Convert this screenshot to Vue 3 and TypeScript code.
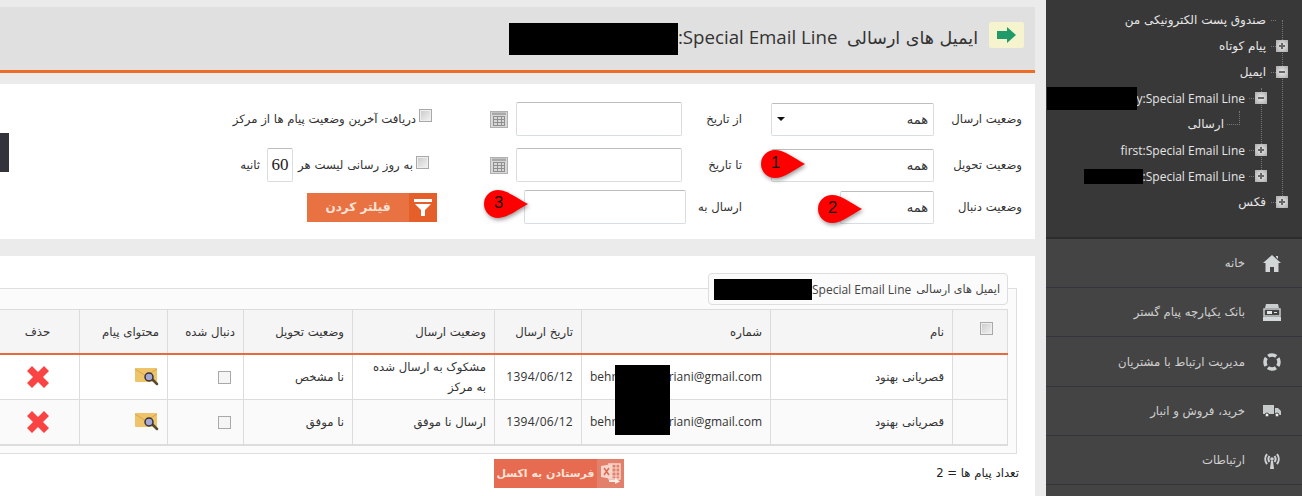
<script setup lang="ts">
interface TreeNode {
  label: string;
  exp?: "plus" | "minus";
  redact?: "long" | "short";
  level: number;
  latin?: boolean;
}

const tree: TreeNode[] = [
  { label: "صندوق پست الکترونیکی من", level: 0 },
  { label: "پیام کوتاه", exp: "plus", level: 0 },
  { label: "ایمیل", exp: "minus", level: 0 },
  { label: "y:Special Email Line", exp: "minus", redact: "long", level: 1, latin: true },
  { label: "ارسالی", level: 2 },
  { label: "first:Special Email Line", exp: "plus", level: 1, latin: true },
  { label: ":Special Email Line", exp: "plus", redact: "short", level: 1, latin: true },
  { label: "فکس", exp: "plus", level: 0 },
];

const navItems = [
  { label: "خانه", icon: "home" },
  { label: "بانک یکپارچه پیام گستر", icon: "bank" },
  { label: "مدیریت ارتباط با مشتریان", icon: "ring" },
  { label: "خرید، فروش و انبار", icon: "truck" },
  { label: "ارتباطات", icon: "signal" },
];

const columns = ["نام", "شماره", "تاریخ ارسال", "وضعیت ارسال", "وضعیت تحویل", "دنبال شده", "محتوای پیام", "حذف"];

const rows = [
  { name: "قصریانی بهنود", date: "1394/06/12", send: "مشکوک به ارسال شده به مرکز", delivery: "نا مشخص" },
  { name: "قصریانی بهنود", date: "1394/06/12", send: "ارسال نا موفق", delivery: "نا موفق" },
];
</script>

<template>
  <div class="page">
    <main class="main">
      <header class="title-bar">
        <span class="title-icon">
          <svg width="19" height="16" viewBox="0 0 19 16"><path d="M0 4h10V0l9 8-9 8v-4H0z" fill="#1f9a68" /></svg>
        </span>
        <h1 class="title">ایمیل های ارسالی <bdi class="latin title-latin">Special Email Line</bdi><bdi class="latin">:</bdi></h1>
        <span class="redact title-redact"></span>
      </header>

      <section class="filters">
        <span class="side-tab"></span>

        <div class="filter-row row-one">
          <label class="lbl">وضعیت ارسال</label>
          <div class="select">
            <span>همه</span>
            <i class="caret"></i>
          </div>
          <label class="lbl lbl-second">از تاریخ</label>
          <input class="field" type="text" />
          <span class="cal-cell">
            <svg class="cal" width="18" height="17" viewBox="0 0 18 17">
              <rect x="0.5" y="0.5" width="17" height="16" fill="#d8d8d8" stroke="#b0b0b0" />
              <rect x="2" y="1.5" width="14" height="2.5" fill="#a9a9a9" />
              <path d="M3 5.500h12M3 8.500h12M3 11.500h12M3 14.500h12M3.500 5v10M7.500 5v10M11.500 5v10M14.500 5v10" stroke="#8f8f8f" fill="none" />
            </svg>
          </span>
          <div class="extra extra-one">
            <input class="check" type="checkbox" />
            <span class="check-text">دریافت آخرین وضعیت پیام ها از مرکز</span>
          </div>
        </div>

        <div class="filter-row row-two">
          <label class="lbl">وضعیت تحویل</label>
          <div class="select"><span>همه</span></div>
          <label class="lbl lbl-second">تا تاریخ</label>
          <input class="field" type="text" />
          <span class="cal-cell">
            <svg class="cal" width="18" height="17" viewBox="0 0 18 17">
              <rect x="0.5" y="0.5" width="17" height="16" fill="#d8d8d8" stroke="#b0b0b0" />
              <rect x="2" y="1.5" width="14" height="2.5" fill="#a9a9a9" />
              <path d="M3 5.500h12M3 8.500h12M3 11.500h12M3 14.500h12M3.500 5v10M7.500 5v10M11.500 5v10M14.500 5v10" stroke="#8f8f8f" fill="none" />
            </svg>
          </span>
          <div class="extra extra-two">
            <input class="check" type="checkbox" />
            <span class="check-text">به روز رسانی لیست هر</span>
            <input class="seconds" type="text" value="60" />
            <span class="check-text">ثانیه</span>
          </div>
        </div>

        <div class="filter-row row-three">
          <label class="lbl">وضعیت دنبال</label>
          <div class="select select-short"><span>همه</span></div>
          <label class="lbl lbl-second">ارسال به</label>
          <input class="field field-wide" type="text" />
          <div class="extra extra-three">
            <button class="btn filter-btn" type="button">
              <span class="btn-icon filter-icon">
                <svg width="20" height="20" viewBox="0 0 20 20"><path d="M1 2h18v3H1zM2 7h16l-6 6v6H8v-6z" fill="#fff" /></svg>
              </span>
              <span class="btn-text">فیلتر کردن</span>
            </button>
          </div>
        </div>

        <div class="pin pin-1">
          <svg width="46" height="30" viewBox="0 0 46 30"><path d="M15 1C24 1 34 9 45 15 34 21 24 29 15 29A14 14 0 0 1 15 1Z" fill="#f00" /></svg>
          <span class="pin-num">1</span>
        </div>
        <div class="pin pin-2">
          <svg width="46" height="30" viewBox="0 0 46 30"><path d="M15 1C24 1 34 9 45 15 34 21 24 29 15 29A14 14 0 0 1 15 1Z" fill="#f00" /></svg>
          <span class="pin-num">2</span>
        </div>
        <div class="pin pin-3">
          <svg width="46" height="30" viewBox="0 0 46 30"><path d="M15 1C24 1 34 9 45 15 34 21 24 29 15 29A14 14 0 0 1 15 1Z" fill="#f00" /></svg>
          <span class="pin-num">3</span>
        </div>
      </section>

      <section class="list-panel">
        <div class="fieldset">
          <div class="legend">
            <span>ایمیل های ارسالی</span>
            <bdi class="latin legend-latin">Special Email Line</bdi>
            <span class="redact legend-redact"></span>
          </div>

          <table class="grid">
            <colgroup>
              <col class="c-check" />
              <col class="c-name" />
              <col class="c-number" />
              <col class="c-date" />
              <col class="c-send" />
              <col class="c-delivery" />
              <col class="c-follow" />
              <col class="c-content" />
              <col class="c-delete" />
            </colgroup>
            <thead>
              <tr>
                <th class="head-check"><input class="check" type="checkbox" /></th>
                <th v-for="col in columns" :key="col" :class="{ center: col === 'حذف' }">{{ col }}</th>
              </tr>
            </thead>
            <tbody>
              <tr v-for="(row, i) in rows" :key="i">
                <td class="check-col"></td>
                <td>{{ row.name }}</td>
                <td class="email-cell">
                  <bdi class="email">
                    <span>behr</span>
                    <span class="email-gap"></span>
                    <span>riani@gmail.com</span>
                  </bdi>
                  <span v-if="i === 0" class="redact email-redact"></span>
                </td>
                <td><bdi class="latin date">{{ row.date }}</bdi></td>
                <td>{{ row.send }}</td>
                <td>{{ row.delivery }}</td>
                <td class="follow"><input class="check plain" type="checkbox" /></td>
                <td class="content">
                  <svg width="24" height="20" viewBox="0 0 24 20">
                    <rect x="0" y="1" width="22" height="14" rx="1" fill="#eec36a" />
                    <path d="M0 2l11 7 11-7" fill="none" stroke="#d8a548" />
                    <path d="M17 12l5 5" stroke="#5b4a2a" stroke-width="2.500" stroke-linecap="round" />
                    <circle cx="14" cy="10" r="4" fill="#a6a6d8" stroke="#333" stroke-width="1.500" />
                  </svg>
                </td>
                <td class="center">
                  <svg class="del" width="22" height="22" viewBox="0 0 22 22">
                    <path d="M5 0l6 6 6-6 5 5-6 6 6 6-5 5-6-6-6 6-5-5 6-6-6-6z" fill="#fa4444" />
                  </svg>
                </td>
              </tr>
            </tbody>
          </table>
        </div>

        <div class="list-footer">
          <span class="count">تعداد پیام ها = 2</span>
          <button class="btn excel-btn" type="button">
            <span class="btn-icon excel-icon">
              <svg width="20" height="22" viewBox="0 0 20 22">
                <path d="M8 2h11v15H8z" fill="none" stroke="#f6d5cc" stroke-width="1.500" />
                <path d="M11 2v15M15 2v15M8 6h11M8 10h11M8 14h11" stroke="#f6d5cc" />
                <path d="M0 4l11-2v15L0 15z" fill="#f6d5cc" />
                <path d="M3 6l5 7M8 6l-5 7" stroke="#e0694e" stroke-width="1.500" />
                <path d="M8 18h6v-2l5 3.500-5 2.500v-2H8z" fill="#fbe9e4" />
              </svg>
            </span>
            <span class="btn-text">فرستادن به اکسل</span>
          </button>
        </div>
      </section>
    </main>

    <aside class="sidebar">
      <div class="tree">
        <div v-for="node in tree" :key="node.label" class="tree-row" :class="'lv-' + node.level">
          <span v-if="node.exp" class="exp" :class="node.exp"></span>
          <i class="dash"></i>
          <bdi :class="{ latin: node.latin }">{{ node.label }}</bdi>
          <span v-if="node.redact" class="redact" :class="'tree-' + node.redact"></span>
        </div>
      </div>

      <nav class="nav">
        <a v-for="item in navItems" :key="item.icon" class="nav-item">
          <span class="nav-icon">
            <svg v-if="item.icon === 'home'" width="18" height="17" viewBox="0 0 18 17">
              <path d="M9 0l9 8h-2.500v9h-4.500v-5H7v5H2.500V8H0zM13 1h2v3l-2-2z" fill="#d2d6d6" />
            </svg>
            <svg v-else-if="item.icon === 'bank'" width="18" height="17" viewBox="0 0 18 17">
              <path d="M3 0h12l1 4H2z" fill="#c9cdcd" />
              <path d="M1 5h16v7H1z" fill="none" stroke="#c9cdcd" stroke-width="1.500" />
              <path d="M4 7h5v3H4zM11 8h3v1h-3z" fill="#e4e6e6" />
              <path d="M0 13h18v4H0z" fill="#d5d8d8" />
            </svg>
            <svg v-else-if="item.icon === 'ring'" width="18" height="18" viewBox="0 0 18 18">
              <circle cx="9" cy="9" r="7" fill="none" stroke="#cfd3d3" stroke-width="3.500" stroke-dasharray="8.500 2.500" stroke-dashoffset="4.250" />
            </svg>
            <svg v-else-if="item.icon === 'truck'" width="18" height="12" viewBox="0 0 18 12">
              <path d="M0 0h11v9H0zM12 3h3l3 3v4h-6z" fill="#c6caca" />
              <circle cx="4" cy="10" r="2" fill="#eee" stroke="#444" />
              <circle cx="14" cy="10" r="2" fill="#eee" stroke="#444" />
            </svg>
            <svg v-else width="18" height="17" viewBox="0 0 18 17">
              <path d="M4 2a8 8 0 0 0 0 10M14 2a8 8 0 0 1 0 10M6.500 4a5 5 0 0 0 0 6M11.500 4a5 5 0 0 1 0 6" fill="none" stroke="#cfd3d3" stroke-width="2" />
              <circle cx="9" cy="7" r="1.800" fill="#cfd3d3" />
              <path d="M8 9h2l1 8H7z" fill="#cfd3d3" />
            </svg>
          </span>
          <span class="nav-label">{{ item.label }}</span>
        </a>
      </nav>
    </aside>
  </div>
</template>

<style>
html,
body {
  margin: 0;
  background: #ebebeb;
}
</style>

<style scoped>
.page {
  display: flex;
  width: 1302px;
  height: 496px;
  overflow: hidden;
  font-family: "DejaVu Sans", sans-serif;
  font-size: 11.7px;
  color: #333;
  direction: rtl;
}

/* sidebar comes second in the markup but sits on the right */
.sidebar {
  order: 0;
  flex: none;
  width: 256px;
  background: #444;
}

.main {
  order: 1;
  flex: none;
  width: 1035px;
  height: 496px;
  margin-right: 11px;
  padding-top: 7px;
  box-sizing: border-box;
  overflow: hidden;
}

.latin {
  font-family: "Open Sans", sans-serif;
}

.redact {
  display: block;
  flex: none;
  background: #000;
}

.title-bar {
  display: flex;
  align-items: center;
  height: 63px;
  padding-right: 11px;
  background: #e0e0e0;
  border-bottom: 3px solid #ee6c25;
}

.title-icon {
  display: flex;
  align-items: center;
  justify-content: center;
  width: 35px;
  height: 26px;
  margin-bottom: 7px;
  background: #f6f3cf;
  border-radius: 2px;
}

.title {
  margin: 0 11px 4px 0;
  font-size: 17.5px;
  font-weight: normal;
  color: #333;
  white-space: nowrap;
}

.title .latin {
  font-size: 18.7px;
}

.title-latin {
  margin-right: 4px;
}

.title-redact {
  width: 169px;
  height: 32px;
  margin-top: 1px;
}

.filters {
  position: relative;
  margin-top: 11px;
  height: 155px;
  padding-top: 18px;
  box-sizing: border-box;
  background: #fff;
}

.side-tab {
  position: absolute;
  left: 0;
  top: 49px;
  width: 9px;
  height: 39px;
  background: #33333b;
}

.filter-row {
  display: grid;
  grid-template-columns: 88px 163px 89px 166px 26px 1fr;
  align-items: center;
  height: 34px;
  padding-right: 13px;
}

.row-two {
  margin-top: 12px;
}

.row-three {
  margin-top: 8px;
}

.lbl {
  white-space: nowrap;
  color: #333;
}

.lbl-second {
  padding-right: 29px;
}

.select {
  display: flex;
  align-items: center;
  justify-content: space-between;
  height: 33px;
  padding: 0 5px;
  box-sizing: border-box;
  font-size: 13px;
  background: #fff;
  border: 1px solid #d8dde2;
  border-top-color: #bdbdbd;
  border-radius: 2px;
}

.select-short {
  width: 94px;
}

.caret {
  width: 0;
  height: 0;
  border: 4px solid transparent;
  border-top: 4px solid #111;
  border-bottom: 0;
}

.field {
  width: 166px;
  height: 34px;
  padding: 0 4px;
  box-sizing: border-box;
  background: #fff;
  border: 1px solid #d8dde2;
  border-top-color: #bdbdbd;
  border-radius: 2px;
  outline: none;
}

.field-wide {
  width: 162px;
  margin-right: -4px;
}

.cal-cell {
  display: flex;
  padding-right: 8px;
}

.extra {
  display: flex;
  align-items: center;
  gap: 3px;
  white-space: nowrap;
}

.extra-one {
  padding-right: 58px;
}

.extra-two {
  padding-right: 61px;
}

.extra-three {
  grid-column: span 2;
  padding-right: 79px;
}

.check-text {
  color: #333;
}

.check {
  appearance: none;
  flex: none;
  width: 13px;
  height: 13px;
  margin: 0;
  background: linear-gradient(135deg, #c9c9c9, #f4f4f4);
  border: 1px solid #a9a9a9;
  box-shadow: inset 0 0 0 1px #eee;
}

.check.plain {
  background: #f5f5f5;
  box-shadow: none;
}

.extra-one .check {
  margin-bottom: 7px;
}

.extra-two .check {
  margin-bottom: 6px;
}

.seconds {
  width: 26px;
  height: 34px;
  margin: 0 2px;
  padding: 0;
  box-sizing: border-box;
  text-align: center;
  font-family: "Liberation Serif", serif;
  font-size: 17px;
  color: #222;
  background: #fff;
  border: 1px solid #d8dde2;
  border-top-color: #bdbdbd;
  border-radius: 2px;
  outline: none;
}

.seconds + .check-text {
  margin-right: 2px;
}

.btn {
  display: flex;
  align-items: center;
  width: 130px;
  height: 29px;
  padding: 0;
  border: 0;
  color: #fbe3d8;
  font-family: inherit;
  font-weight: bold;
  white-space: nowrap;
}

.btn-icon {
  display: flex;
  align-items: center;
  justify-content: center;
  flex: none;
  height: 100%;
}

.btn-text {
  flex: 1;
  text-align: center;
}

.filter-btn {
  font-size: 12px;
  background: #e97242;
}

.filter-icon {
  width: 28px;
  background: #e55f2b;
}

.excel-btn {
  font-size: 11px;
  background: #e66b50;
}

.excel-icon {
  width: 27px;
  background: #e2806b;
}

.pin {
  position: absolute;
  width: 46px;
  height: 30px;
  filter: drop-shadow(1px 2px 2px rgba(0, 0, 0, 0.4));
}

.pin svg {
  display: block;
}

.pin-num {
  position: absolute;
  left: 0;
  top: 0;
  width: 32px;
  text-align: center;
  font-family: "Liberation Sans", sans-serif;
  font-size: 17px;
  line-height: 28px;
  color: #111;
}

.pin-1 {
  top: 65px;
  right: 229px;
}

.pin-2 {
  top: 110px;
  right: 172px;
}

.pin-3 {
  top: 105px;
  right: 506px;
}

.list-panel {
  margin-top: 17px;
  height: 240px;
  padding-top: 32px;
  box-sizing: border-box;
  background: #fff;
}

.fieldset {
  width: 1040px;
  height: 166px;
  margin-right: 18px;
  padding: 0 8px 0 0;
  box-sizing: border-box;
  background: #fbfbfb;
  border: 1px solid #dedede;
}

.legend {
  display: flex;
  align-items: center;
  width: 300px;
  height: 32px;
  margin-top: -16px;
  padding-right: 7px;
  box-sizing: border-box;
  font-size: 11.2px;
  background: #fbfbfb;
  border: 1px solid #dedede;
  border-radius: 4px;
  white-space: nowrap;
  color: #444;
}

.legend-latin {
  font-size: 12px;
  margin-right: 5px;
}

.legend-redact {
  width: 98px;
  height: 21px;
}

.grid {
  width: 1012px;
  margin-top: 4px;
  table-layout: fixed;
  border-collapse: collapse;
  background: #fff;
  border-bottom: 2px solid #ddd;
}

.c-check { width: 55px; }
.c-name { width: 182px; }
.c-number { width: 189px; }
.c-date { width: 87px; }
.c-send { width: 142px; }
.c-delivery { width: 109px; }
.c-follow { width: 76px; }
.c-content { width: 88px; }
.c-delete { width: 84px; }

.grid th {
  height: 43px;
  padding: 0 8px;
  text-align: right;
  font-weight: normal;
  color: #333;
  background: #f5f5f5;
  border: 1px solid #dcdcdc;
  border-bottom: 2px solid #e8693c;
}

.grid th.head-check {
  padding-right: 14px;
}

.head-check .check {
  display: block;
  margin-bottom: 6px;
}

.grid td {
  height: 44px;
  padding: 0 8px;
  line-height: 20px;
  color: #333;
  border: 1px solid #dcdcdc;
}

.grid tbody tr:nth-child(2) td,
.grid td.check-col {
  background: #fafafa;
}

.grid .center {
  text-align: center;
}

.email-cell {
  position: relative;
}

.email {
  display: flex;
  direction: ltr;
  font-family: "Open Sans", sans-serif;
  font-size: 12px;
}

.email-gap {
  flex: 1;
}

.email-redact {
  position: absolute;
  z-index: 2;
  top: 10px;
  left: 33px;
  width: 55px;
  height: 70px;
}

.date {
  font-size: 12px;
  letter-spacing: 0.3px;
}

.grid td.follow {
  padding-right: 12px;
}

.follow .check {
  display: block;
}

.content svg {
  display: block;
}

.del {
  display: block;
  margin: 0 auto;
}

.list-footer {
  display: flex;
  align-items: center;
  height: 30px;
  margin-top: 4px;
  padding-right: 16px;
}

.count {
  width: 82px;
  flex: none;
  white-space: nowrap;
  color: #222;
}

.excel-btn {
  margin-right: 313px;
}

.tree {
  position: relative;
  height: 239px;
  padding-top: 7px;
  box-sizing: border-box;
  font-size: 12px;
  background: #383838;
  border-bottom: 2px solid #2c2c2c;
  color: #e6e6e6;
}

.tree::before {
  content: "";
  position: absolute;
  top: 20px;
  right: 19px;
  height: 182px;
  border-right: 1px dotted #777;
}

.tree::after {
  content: "";
  position: absolute;
  top: 88px;
  right: 40px;
  height: 88px;
  border-right: 1px dotted #777;
}

.tree-row {
  position: relative;
  display: flex;
  align-items: center;
  height: 26px;
  white-space: nowrap;
}

.tree-row .latin {
  font-size: 12px;
}

.lv-0 {
  padding-right: 36px;
}

.lv-1 {
  padding-right: 57px;
}

.lv-2 {
  padding-right: 78px;
}

.exp {
  position: absolute;
  z-index: 1;
  top: 7px;
  width: 12px;
  height: 12px;
  background: radial-gradient(#e8e8e8, #aaa);
}

.lv-0 .exp {
  right: 14px;
}

.lv-1 .exp {
  right: 35px;
}

.exp::before {
  content: "";
  position: absolute;
  left: 3px;
  top: 5px;
  width: 6px;
  height: 2px;
  background: #666;
}

.exp.plus::after {
  content: "";
  position: absolute;
  left: 5px;
  top: 3px;
  width: 2px;
  height: 6px;
  background: #666;
}

.dash {
  position: absolute;
  top: 13px;
  width: 5px;
  border-top: 1px dotted #777;
}

.lv-0 .dash {
  right: 26px;
}

.lv-1 .dash {
  right: 48px;
}

.lv-2 .dash {
  top: 0;
  right: 62px;
  width: 12px;
  height: 13px;
  border-top: 0;
  border-right: 1px dotted #777;
  border-bottom: 1px dotted #777;
}

.tree-long {
  width: 90px;
  height: 23px;
}

.tree-short {
  width: 59px;
  height: 15px;
}

.nav-item {
  display: flex;
  align-items: center;
  height: 48px;
  border-bottom: 1px solid #33343c;
  color: #cfcfcf;
  font-size: 11.7px;
}

.nav-item:nth-child(3) {
  height: 49px;
}

.nav-icon {
  display: flex;
  justify-content: center;
  width: 18px;
  margin: 0 21px 0 18px;
}

.nav-label {
  white-space: nowrap;
}
</style>
